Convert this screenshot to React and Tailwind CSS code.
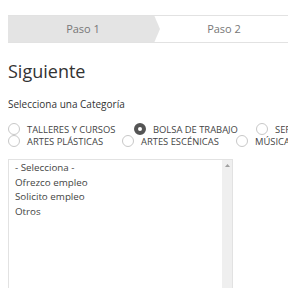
import React from 'react'

const row1 = [
  { label: 'TALLERES Y CURSOS', checked: false, w: 'w-[126px]' },
  { label: 'BOLSA DE TRABAJO', checked: true, w: 'w-[122px]' },
  { label: 'SERVICIOS', checked: false, w: 'w-[120px]' },
]
const row2 = [
  { label: 'ARTES PLÁSTICAS', checked: false, w: 'w-[114px]' },
  { label: 'ARTES ESCÉNICAS', checked: false, w: 'w-[114px]' },
  { label: 'MÚSICA', checked: false, w: 'w-[100px]' },
]

function Radio({ label, checked, w }) {
  return (
    <div className={`flex items-center shrink-0 h-[12px] ${w}`}>
      {checked ? (
        <span className="w-[12px] h-[12px] rounded-full border-[4px] border-[#555] bg-white shrink-0" />
      ) : (
        <span className="w-[12px] h-[12px] rounded-full border border-[#c8c8c8] bg-white shrink-0" />
      )}
      <span className="ml-[7px] text-[9.4px] leading-[11px] text-[#444] whitespace-nowrap">{label}</span>
    </div>
  )
}

export default function App() {
  const options = ['- Selecciona -', 'Ofrezco empleo', 'Solicito empleo', 'Otros']
  return (
    <div className="w-[288px] h-[288px] overflow-hidden bg-white font-['Open_Sans',sans-serif]">
      <div className="pt-[15px] pl-[8px]">
        <div className="flex h-[28px] border-y border-[#e2e2e2] bg-white w-[300px]">
          <div className="relative w-[146px] bg-[#e4e4e4] flex items-center justify-center pl-[4px] text-[11px] text-[#777]">
            Paso 1
            <svg className="absolute right-[-6px] top-[-1px]" width="6" height="28" viewBox="0 0 6 28">
              <polygon points="0,0 6,14 0,28" fill="#e4e4e4" />
            </svg>
          </div>
          <div className="w-[140px] flex items-center justify-center text-[11px] text-[#777]">
            Paso 2
          </div>
        </div>
      </div>

      <div className="px-[8px]">
        <h1 className="mt-[16px] text-[18px] leading-[24px] text-[#333]">Siguiente</h1>
        <p className="mt-[14px] text-[10px] leading-[14px] text-[#333]">Selecciona una Categoría</p>

        <div className="mt-[12px] flex flex-col">
          <div className="flex">
            {row1.map(r => <Radio key={r.label} {...r} />)}
          </div>
          <div className="flex">
            {row2.map(r => <Radio key={r.label} {...r} />)}
          </div>
        </div>

        <div className="mt-[12px] flex w-[225px] h-[140px] border border-[#e2e2e2]">
          <div className="flex-1 pt-[1px] pl-[6px]">
            {options.map(o => (
              <div key={o} className="text-[9.8px] leading-[14.5px] text-[#444]">{o}</div>
            ))}
          </div>
          <div className="w-[10px] bg-[#efefef] flex justify-center pt-[4px]">
            <svg width="5" height="3" viewBox="0 0 5 3">
              <polygon points="2.5,0 5,3 0,3" fill="#a0a0a0" />
            </svg>
          </div>
        </div>
      </div>
    </div>
  )
}
